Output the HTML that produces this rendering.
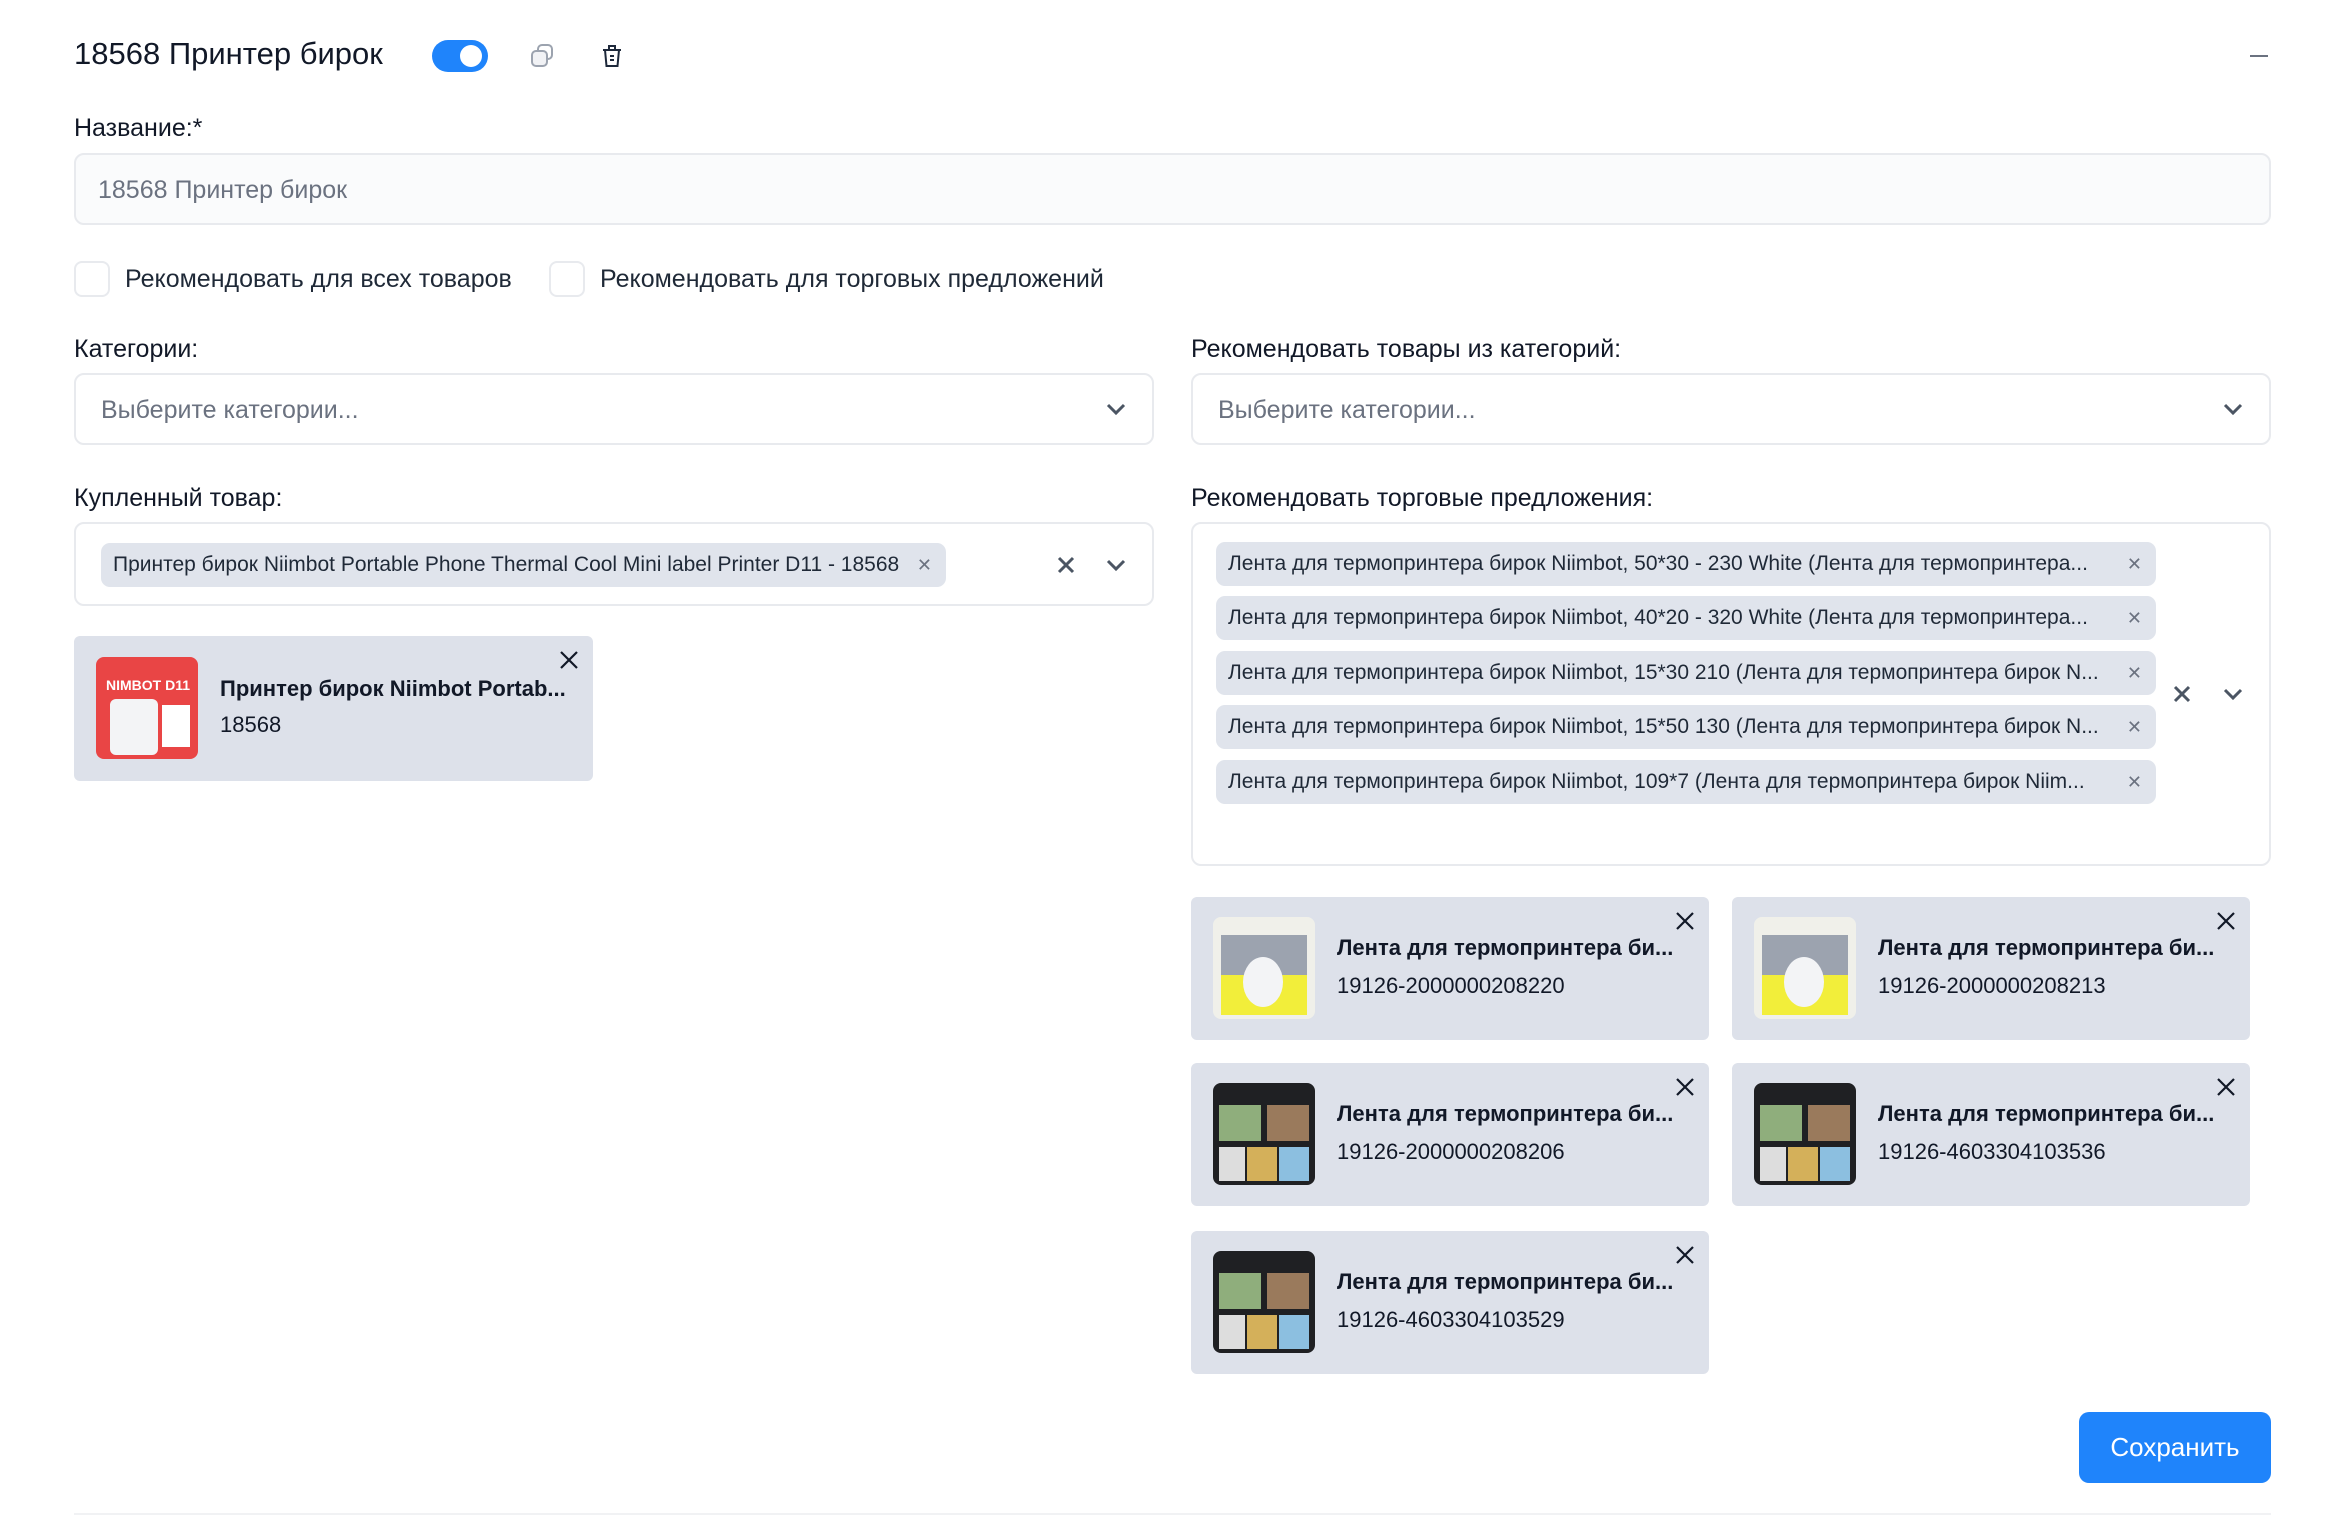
<!DOCTYPE html>
<html><head><meta charset="utf-8"><style>
*{box-sizing:border-box;margin:0;padding:0}
body{width:2332px;height:1518px;background:#fff;font-family:"Liberation Sans","Noto Sans CJK SC",sans-serif;color:#1f2937;position:relative;overflow:hidden}
.a{position:absolute}
.lbl{font-size:25px;color:#111827}
.inp{border:2px solid #e8eaee;border-radius:10px;background:#fff}
.ph{font-size:25px;color:#6b7280}
.chip{position:absolute;background:#e0e4ec;border-radius:9px;font-size:21px;color:#1f2937;line-height:44px;padding-left:12px;height:44px;white-space:nowrap}
.chip .x{position:absolute;right:14px;top:0;color:#6b7280;font-size:18px}
.card{position:absolute;background:#dde1ea;border-radius:6px}
.card .im{position:absolute;left:22px;top:20px;width:102px;height:102px;border-radius:8px;overflow:hidden}
.card .t{position:absolute;left:146px;top:38px;font-size:22px;font-weight:bold;color:#111827;white-space:nowrap}
.card .s{position:absolute;left:146px;top:76px;font-size:22px;color:#111827}
.card .c{position:absolute;right:14px;top:14px}
</style></head><body>
<div class="a" style="left:74px;top:36px;font-size:31px;color:#111827">18568 Принтер бирок</div>
<div class="a" style="left:432px;top:40px;width:56px;height:32px;border-radius:16px;background:#1f84fb"><div class="a" style="left:28px;top:5px;width:22px;height:22px;border-radius:50%;background:#fff"></div></div>
<svg class="a" style="left:530px;top:43px" width="26" height="26" viewBox="0 0 26 26" fill="none" stroke="#9ca3af" stroke-width="2"><rect x="2" y="8" width="15" height="15" rx="4" fill="#f1f2f5"/><path d="M8 7V6a4 4 0 0 1 4-4h6a4 4 0 0 1 4 4v6a4 4 0 0 1-4 4h-1"/></svg>
<svg class="a" style="left:600px;top:43px" width="24" height="26" viewBox="0 0 24 26" fill="none" stroke="#1e293b" stroke-width="2"><path d="M3 7h18M9 7V3h6v4M5 7l1.5 16h11L19 7M10 13h4M10 17h4"/></svg>
<div class="a" style="left:2250px;top:55px;width:18px;height:2px;background:#6b7280"></div>

<div class="a lbl" style="left:74px;top:114px">Название:*</div>
<div class="a inp" style="left:74px;top:153px;width:2197px;height:72px;background:#fafbfc"><div class="a ph" style="left:22px;top:21px">18568 Принтер бирок</div></div>

<div class="a inp" style="left:74px;top:261px;width:36px;height:36px;border-radius:8px"></div>
<div class="a" style="left:125px;top:265px;font-size:25px;color:#1f2937">Рекомендовать для всех товаров</div>
<div class="a inp" style="left:549px;top:261px;width:36px;height:36px;border-radius:8px"></div>
<div class="a" style="left:600px;top:265px;font-size:25px;color:#1f2937">Рекомендовать для торговых предложений</div>

<div class="a lbl" style="left:74px;top:335px">Категории:</div>
<div class="a inp" style="left:74px;top:373px;width:1080px;height:72px"><div class="a ph" style="left:25px;top:21px">Выберите категории...</div>
<svg class="a" style="left:1029px;top:26px" width="22" height="16" viewBox="0 0 22 16" fill="none" stroke="#4b5563" stroke-width="3"><path d="M3 4l8 8 8-8"/></svg></div>
<div class="a lbl" style="left:1191px;top:335px">Рекомендовать товары из категорий:</div>
<div class="a inp" style="left:1191px;top:373px;width:1080px;height:72px"><div class="a ph" style="left:25px;top:21px">Выберите категории...</div>
<svg class="a" style="left:1029px;top:26px" width="22" height="16" viewBox="0 0 22 16" fill="none" stroke="#4b5563" stroke-width="3"><path d="M3 4l8 8 8-8"/></svg></div>

<div class="a lbl" style="left:74px;top:484px">Купленный товар:</div>
<div class="a inp" style="left:74px;top:522px;width:1080px;height:84px">
<div class="chip" style="left:25px;top:19px;width:845px">Принтер бирок Niimbot Portable Phone Thermal Cool Mini label Printer D11 - 18568<span class="x">✕</span></div>
<svg class="a" style="left:980px;top:31px" width="20" height="20" viewBox="0 0 20 20" stroke="#4b5563" stroke-width="3"><path d="M3 3l14 14M17 3L3 17"/></svg>
<svg class="a" style="left:1029px;top:33px" width="22" height="16" viewBox="0 0 22 16" fill="none" stroke="#4b5563" stroke-width="3"><path d="M3 4l8 8 8-8"/></svg></div>

<div class="card" style="left:74px;top:636px;width:519px;height:145px">
<div class="im" style="background:#e94545;top:21px"><div class="a" style="left:10px;top:20px;color:#fff;font-weight:bold;font-size:14px">NIMBOT D11</div><div class="a" style="left:14px;top:42px;width:48px;height:56px;background:#f3f4f6;border-radius:6px"></div><div class="a" style="left:66px;top:48px;width:28px;height:42px;background:#fff"></div></div>
<div class="t" style="top:40px">Принтер бирок Niimbot Portab...</div>
<div class="s" style="top:76px">18568</div>
<svg class="c" width="20" height="20" viewBox="0 0 20 20" stroke="#111827" stroke-width="2.2"><path d="M2 2l16 16M18 2L2 18"/></svg></div>

<div class="a lbl" style="left:1191px;top:484px">Рекомендовать торговые предложения:</div>
<div class="a inp" style="left:1191px;top:522px;width:1080px;height:344px">
<div class="chip" style="left:23px;top:18px;width:940px">Лента для термопринтера бирок Niimbot, 50*30 - 230 White (Лента для термопринтера...<span class="x">✕</span></div>
<div class="chip" style="left:23px;top:72px;width:940px">Лента для термопринтера бирок Niimbot, 40*20 - 320 White (Лента для термопринтера...<span class="x">✕</span></div>
<div class="chip" style="left:23px;top:127px;width:940px">Лента для термопринтера бирок Niimbot, 15*30 210 (Лента для термопринтера бирок N...<span class="x">✕</span></div>
<div class="chip" style="left:23px;top:181px;width:940px">Лента для термопринтера бирок Niimbot, 15*50 130 (Лента для термопринтера бирок N...<span class="x">✕</span></div>
<div class="chip" style="left:23px;top:236px;width:940px">Лента для термопринтера бирок Niimbot, 109*7 (Лента для термопринтера бирок Niim...<span class="x">✕</span></div>
<svg class="a" style="left:979px;top:160px" width="20" height="20" viewBox="0 0 20 20" stroke="#4b5563" stroke-width="3"><path d="M3 3l14 14M17 3L3 17"/></svg>
<svg class="a" style="left:1029px;top:162px" width="22" height="16" viewBox="0 0 22 16" fill="none" stroke="#4b5563" stroke-width="3"><path d="M3 4l8 8 8-8"/></svg></div>

<div class="card" style="left:1191px;top:897px;width:518px;height:143px"><div class="im" style="background:#f0f0ea"><div class="a" style="left:8px;top:18px;width:86px;height:80px;background:#f2ee3a"></div><div class="a" style="left:8px;top:18px;width:86px;height:40px;background:#9ca3af"></div><div class="a" style="left:30px;top:40px;width:40px;height:50px;border-radius:50%;background:#f3f4f6"></div></div><div class="t">Лента для термопринтера би...</div><div class="s">19126-2000000208220</div><svg class="c" width="20" height="20" viewBox="0 0 20 20" stroke="#111827" stroke-width="2.2"><path d="M2 2l16 16M18 2L2 18"/></svg></div>
<div class="card" style="left:1732px;top:897px;width:518px;height:143px"><div class="im" style="background:#f0f0ea"><div class="a" style="left:8px;top:18px;width:86px;height:80px;background:#f2ee3a"></div><div class="a" style="left:8px;top:18px;width:86px;height:40px;background:#9ca3af"></div><div class="a" style="left:30px;top:40px;width:40px;height:50px;border-radius:50%;background:#f3f4f6"></div></div><div class="t">Лента для термопринтера би...</div><div class="s">19126-2000000208213</div><svg class="c" width="20" height="20" viewBox="0 0 20 20" stroke="#111827" stroke-width="2.2"><path d="M2 2l16 16M18 2L2 18"/></svg></div>
<div class="card" style="left:1191px;top:1063px;width:518px;height:143px"><div class="im" style="background:#1f2023"><div class="a" style="left:6px;top:22px;width:42px;height:36px;background:#8fae7c"></div><div class="a" style="left:54px;top:22px;width:42px;height:36px;background:#9a7a5c"></div><div class="a" style="left:6px;top:64px;width:26px;height:34px;background:#ddd"></div><div class="a" style="left:34px;top:64px;width:30px;height:34px;background:#d4b05a"></div><div class="a" style="left:66px;top:64px;width:30px;height:34px;background:#8cbfe0"></div></div><div class="t">Лента для термопринтера би...</div><div class="s">19126-2000000208206</div><svg class="c" width="20" height="20" viewBox="0 0 20 20" stroke="#111827" stroke-width="2.2"><path d="M2 2l16 16M18 2L2 18"/></svg></div>
<div class="card" style="left:1732px;top:1063px;width:518px;height:143px"><div class="im" style="background:#1f2023"><div class="a" style="left:6px;top:22px;width:42px;height:36px;background:#8fae7c"></div><div class="a" style="left:54px;top:22px;width:42px;height:36px;background:#9a7a5c"></div><div class="a" style="left:6px;top:64px;width:26px;height:34px;background:#ddd"></div><div class="a" style="left:34px;top:64px;width:30px;height:34px;background:#d4b05a"></div><div class="a" style="left:66px;top:64px;width:30px;height:34px;background:#8cbfe0"></div></div><div class="t">Лента для термопринтера би...</div><div class="s">19126-4603304103536</div><svg class="c" width="20" height="20" viewBox="0 0 20 20" stroke="#111827" stroke-width="2.2"><path d="M2 2l16 16M18 2L2 18"/></svg></div>
<div class="card" style="left:1191px;top:1231px;width:518px;height:143px"><div class="im" style="background:#1f2023"><div class="a" style="left:6px;top:22px;width:42px;height:36px;background:#8fae7c"></div><div class="a" style="left:54px;top:22px;width:42px;height:36px;background:#9a7a5c"></div><div class="a" style="left:6px;top:64px;width:26px;height:34px;background:#ddd"></div><div class="a" style="left:34px;top:64px;width:30px;height:34px;background:#d4b05a"></div><div class="a" style="left:66px;top:64px;width:30px;height:34px;background:#8cbfe0"></div></div><div class="t">Лента для термопринтера би...</div><div class="s">19126-4603304103529</div><svg class="c" width="20" height="20" viewBox="0 0 20 20" stroke="#111827" stroke-width="2.2"><path d="M2 2l16 16M18 2L2 18"/></svg></div>

<div class="a" style="left:2079px;top:1412px;width:192px;height:71px;background:#1f84fb;border-radius:10px;color:#fff;font-size:26px;text-align:center;line-height:71px">Сохранить</div>
<div class="a" style="left:74px;top:1513px;width:2197px;height:2px;background:#f1f2f4"></div>
</body></html>
